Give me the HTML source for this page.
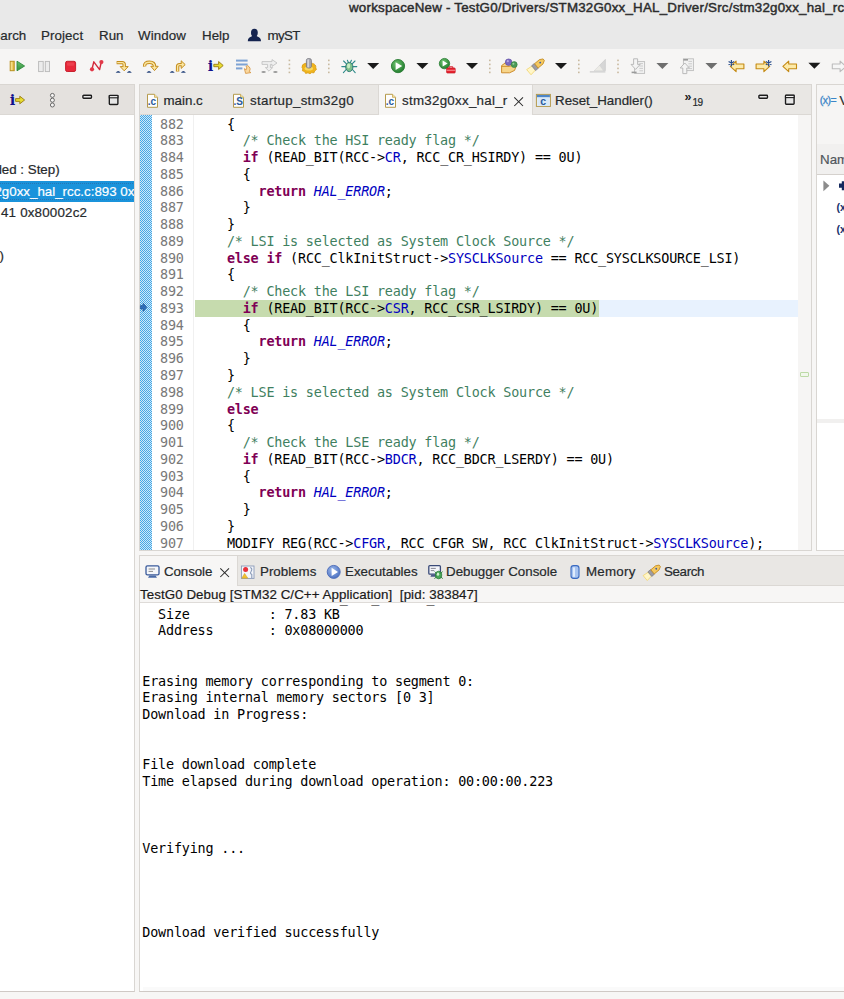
<!DOCTYPE html>
<html lang="en">
<head>
<meta charset="utf-8">
<title>workspaceNew - TestG0/Drivers/STM32G0xx_HAL_Driver/Src/stm32g0xx_hal_rcc.c</title>
<style>
html,body{margin:0;padding:0}
body{width:844px;height:999px;overflow:hidden;position:relative;background:#f7f6f5;
  font-family:"Liberation Sans",sans-serif;font-size:13.33px;color:#262a2c}
.abs,.t,.ln,.cl,.co,svg.i{position:absolute}
.t{white-space:nowrap;line-height:16px;height:16px;-webkit-text-stroke:0.2px}
.mono,.ln,.cl,.co{font-family:"DejaVu Sans Mono","Liberation Mono",monospace;font-size:13.45px;letter-spacing:-0.193px;white-space:pre;line-height:16.76px;height:16.76px;color:#000}
.ln{left:147.2px;width:36.5px;text-align:right;color:#787878}
.cl{left:195.3px}
.co{left:142.3px}
.k{color:#7f0055;font-weight:bold}
.c{color:#3f7f5f}
.f{color:#0000c0}
.e{color:#0000c0;font-style:italic}
#top{left:0;top:0;width:844px;height:49px;background:#e9e9e9}
#tb{left:0;top:49px;width:844px;height:35px;background:#f6f5f4}
.panel{background:#fff;border:1px solid #d9d6d2;box-sizing:border-box;overflow:hidden}
.tabbar{position:absolute;left:0;top:0;right:0;height:29px;background:#e9e7e4;border-bottom:1px solid #dbd8d4}
.atab{position:absolute;top:0;height:30px;background:#f7f6f5;border-left:1px solid #dbd8d4;border-right:1px solid #dbd8d4;box-sizing:border-box}
</style>
</head>
<body>
<!-- title + menu -->
<div id="top" class="abs"></div>
<div class="t" style="left:349px;top:0px;color:#2c2c2c;-webkit-text-stroke:0.45px #2c2c2c;letter-spacing:0.22px">workspaceNew - TestG0/Drivers/STM32G0xx_HAL_Driver/Src/stm32g0xx_hal_rcc.c</div>
<div class="t" style="left:-16px;top:28px">Search</div>
<div class="t" style="left:41px;top:28px;letter-spacing:0.1px">Project</div>
<div class="t" style="left:99px;top:28px">Run</div>
<div class="t" style="left:138px;top:28px;letter-spacing:0.1px">Window</div>
<div class="t" style="left:202px;top:28px">Help</div>
<div class="t" style="left:267.5px;top:28px;letter-spacing:-0.6px">myST</div>

<!-- toolbar -->
<div id="tb" class="abs"></div>

<!-- left panel (Debug view) -->
<div class="abs panel" id="lp" style="left:-2px;top:84px;width:137px;height:908px;border-bottom-color:#cfc9c5">
  <div class="tabbar" style="background:#e4e1de"></div>
  <div class="abs" style="left:0;top:95.7px;width:137px;height:21px;background:#1a93db"></div>
  <div class="abs" style="left:-4px;top:97.7px;width:140px;height:17px;border-top:1px dotted #2676b4;border-bottom:1px dotted #2676b4;box-sizing:border-box"></div>
  <div class="t" style="left:-19.4px;top:77px">ended : Step)</div>
  <div class="t" style="left:-12px;top:98.5px;color:#fff;letter-spacing:0px">32g0xx_hal_rcc.c:893 0x80002d0</div>
  <div class="t" style="left:2px;top:120px;letter-spacing:0.2px">41 0x80002c2</div>
  <div class="t" style="left:0.4px;top:163px">)</div>
</div>

<!-- editor panel -->
<div class="abs panel" id="ed" style="left:139px;top:84px;width:673px;height:467px">
  <div class="tabbar"></div>
  <div class="atab" style="left:238px;width:155px"></div>
  <!-- gutter -->
  <div class="abs" style="left:0;top:30px;width:12px;height:436px;background:repeating-conic-gradient(#45a7e6 0% 25%,#cfe9f8 0% 50%) 0 0/2px 2px"></div>
  <div class="abs" style="left:53px;top:30px;width:1px;height:436px;background:#f0f0f0"></div>
  <!-- overview ruler -->
  <div class="abs" style="left:658px;top:30px;width:14px;height:440px;background:#f6f5f4"></div>
  <div class="abs" style="left:659.5px;top:287px;width:9px;height:5px;border:1px solid #bcdaa6;border-radius:1px;background:#f1f7ec;box-sizing:border-box"></div>
  <!-- current line -->
  <div class="abs" style="left:55px;top:215.3px;width:603px;height:16.6px;background:#e8f2fe"></div>
  <div class="abs" style="left:55px;top:215.3px;width:404px;height:16.6px;background:#c6dbae"></div>
</div>
<div class="t" style="left:163.5px;top:93px">main.c</div>
<div class="t" style="left:250px;top:93px;letter-spacing:0.31px">startup_stm32g0</div>
<div class="t" style="left:402px;top:93px;letter-spacing:0.27px">stm32g0xx_hal_r</div>
<div class="t" style="left:555px;top:93px">Reset_Handler()</div>
<div class="t" style="left:692.6px;top:95.3px;font-size:10px;letter-spacing:-0.6px">19</div>
<div id="code" class="abs" style="left:0;top:0;width:844px;height:550px;overflow:hidden">
<div class="ln" style="top:116.60px">882</div><div class="cl" style="top:116.60px">    {</div>
<div class="ln" style="top:133.36px">883</div><div class="cl" style="top:133.36px">      <span class="c">/* Check the HSI ready flag */</span></div>
<div class="ln" style="top:150.12px">884</div><div class="cl" style="top:150.12px">      <span class="k">if</span> (READ_BIT(RCC-&gt;<span class="f">CR</span>, RCC_CR_HSIRDY) == 0U)</div>
<div class="ln" style="top:166.88px">885</div><div class="cl" style="top:166.88px">      {</div>
<div class="ln" style="top:183.64px">886</div><div class="cl" style="top:183.64px">        <span class="k">return</span> <span class="e">HAL_ERROR</span>;</div>
<div class="ln" style="top:200.40px">887</div><div class="cl" style="top:200.40px">      }</div>
<div class="ln" style="top:217.16px">888</div><div class="cl" style="top:217.16px">    }</div>
<div class="ln" style="top:233.92px">889</div><div class="cl" style="top:233.92px">    <span class="c">/* LSI is selected as System Clock Source */</span></div>
<div class="ln" style="top:250.68px">890</div><div class="cl" style="top:250.68px">    <span class="k">else</span> <span class="k">if</span> (RCC_ClkInitStruct-&gt;<span class="f">SYSCLKSource</span> == RCC_SYSCLKSOURCE_LSI)</div>
<div class="ln" style="top:267.44px">891</div><div class="cl" style="top:267.44px">    {</div>
<div class="ln" style="top:284.20px">892</div><div class="cl" style="top:284.20px">      <span class="c">/* Check the LSI ready flag */</span></div>
<div class="ln" style="top:300.96px">893</div><div class="cl" style="top:300.96px">      <span class="k">if</span> (READ_BIT(RCC-&gt;<span class="f">CSR</span>, RCC_CSR_LSIRDY) == 0U)</div>
<div class="ln" style="top:317.72px">894</div><div class="cl" style="top:317.72px">      {</div>
<div class="ln" style="top:334.48px">895</div><div class="cl" style="top:334.48px">        <span class="k">return</span> <span class="e">HAL_ERROR</span>;</div>
<div class="ln" style="top:351.24px">896</div><div class="cl" style="top:351.24px">      }</div>
<div class="ln" style="top:368.00px">897</div><div class="cl" style="top:368.00px">    }</div>
<div class="ln" style="top:384.76px">898</div><div class="cl" style="top:384.76px">    <span class="c">/* LSE is selected as System Clock Source */</span></div>
<div class="ln" style="top:401.52px">899</div><div class="cl" style="top:401.52px">    <span class="k">else</span></div>
<div class="ln" style="top:418.28px">900</div><div class="cl" style="top:418.28px">    {</div>
<div class="ln" style="top:435.04px">901</div><div class="cl" style="top:435.04px">      <span class="c">/* Check the LSE ready flag */</span></div>
<div class="ln" style="top:451.80px">902</div><div class="cl" style="top:451.80px">      <span class="k">if</span> (READ_BIT(RCC-&gt;<span class="f">BDCR</span>, RCC_BDCR_LSERDY) == 0U)</div>
<div class="ln" style="top:468.56px">903</div><div class="cl" style="top:468.56px">      {</div>
<div class="ln" style="top:485.32px">904</div><div class="cl" style="top:485.32px">        <span class="k">return</span> <span class="e">HAL_ERROR</span>;</div>
<div class="ln" style="top:502.08px">905</div><div class="cl" style="top:502.08px">      }</div>
<div class="ln" style="top:518.84px">906</div><div class="cl" style="top:518.84px">    }</div>
<div class="ln" style="top:535.60px">907</div><div class="cl" style="top:535.60px">    MODIFY_REG(RCC-&gt;<span class="f">CFGR</span>, RCC_CFGR_SW, RCC_ClkInitStruct-&gt;<span class="f">SYSCLKSource</span>);</div>
</div>

<!-- right panel (Variables) -->
<div class="abs panel" id="rp" style="left:816px;top:84px;width:40px;height:467px">
  <div class="abs" style="left:0;top:0;width:40px;height:59px;background:#f6f5f4"></div>
  <div class="abs" style="left:0;top:59px;width:40px;height:30px;background:#f1f0ef;border-bottom:1px solid #d5d1cd"></div>
  <div class="abs" style="left:0;top:334px;width:40px;height:4px;background:#f1f0ef"></div>
</div>
<div class="t" style="left:820px;top:152px;color:#50565c">Name</div>
<div class="t" style="left:839.5px;top:93px">Variables</div>

<!-- console panel -->
<div class="abs panel" id="cp" style="left:139px;top:555px;width:720px;height:437px;border-bottom-color:#cfc9c5">
  <div class="tabbar" style="height:29px"></div>
  <div class="atab" style="left:-1px;width:99px;height:30px"></div>
  <div class="abs" style="left:0;top:30px;right:0;height:16px;background:#f7f6f5;border-bottom:1px solid #dedbd8"></div>
</div>
<div class="t" style="left:164px;top:564px;letter-spacing:-0.1px">Console</div>
<div class="t" style="left:260px;top:564px">Problems</div>
<div class="t" style="left:345px;top:564px">Executables</div>
<div class="t" style="left:446px;top:564px">Debugger Console</div>
<div class="t" style="left:586px;top:564px;letter-spacing:0.25px">Memory</div>
<div class="t" style="left:664px;top:564px;letter-spacing:-0.35px">Search</div>
<div class="t" style="left:140px;top:587px;color:#1a1a1a;letter-spacing:0.07px">TestG0 Debug [STM32 C/C++ Application]&nbsp; [pid: 383847]</div>
<div id="console" class="abs" style="left:0;top:603px;width:844px;height:388px;overflow:hidden">
<div class="co" style="top:-13.16px">  File          : ST-LINK_GDB_server_a07972.srec</div>
<div class="co" style="top:3.60px">  Size          : 7.83 KB</div>
<div class="co" style="top:20.36px">  Address       : 0x08000000</div>
<div class="co" style="top:70.64px">Erasing memory corresponding to segment 0:</div>
<div class="co" style="top:87.40px">Erasing internal memory sectors [0 3]</div>
<div class="co" style="top:104.16px">Download in Progress:</div>
<div class="co" style="top:154.44px">File download complete</div>
<div class="co" style="top:171.20px">Time elapsed during download operation: 00:00:00.223</div>
<div class="co" style="top:238.24px">Verifying ...</div>
<div class="co" style="top:322.04px">Download verified successfully</div>
</div>

<div class="abs" style="left:143px;top:986.5px;width:701px;height:4px;background:#fafafa"></div>
<svg class="i" style="left:0;top:0" width="844" height="999" viewBox="0 0 844 999">
<defs>
  <linearGradient id="gy" x1="0" y1="0" x2="1" y2="0"><stop offset="0" stop-color="#fff3b0"/><stop offset="1" stop-color="#e0b030"/></linearGradient>
  <linearGradient id="gg" x1="0" y1="0" x2="0" y2="1"><stop offset="0" stop-color="#6cc070"/><stop offset="1" stop-color="#2f8f3a"/></linearGradient>
  <radialGradient id="grun" cx="0.4" cy="0.35" r="0.7"><stop offset="0" stop-color="#6fc46f"/><stop offset="1" stop-color="#1f7a2c"/></radialGradient>
  <radialGradient id="gblue" cx="0.4" cy="0.35" r="0.7"><stop offset="0" stop-color="#9bb8ea"/><stop offset="1" stop-color="#4a6fc0"/></radialGradient>
  <!-- dropdown triangles -->
  <path id="dd" d="M0,0 h12 l-6,6 z"/>
  <!-- toolbar separator -->
  <g id="sep" fill="#c9b99f"><rect x="0" y="0" width="1.6" height="1.6"/><rect x="0" y="4" width="1.6" height="1.6"/><rect x="0" y="8" width="1.6" height="1.6"/><rect x="0" y="12" width="1.6" height="1.6"/></g>
  <!-- c file icon 11x14 -->
  <g id="cfile">
    <path d="M0.5,0.5 h7 l3,3 v10 h-10 z" fill="#fdfdfd" stroke="#b59a4c" stroke-width="1"/>
    <path d="M7.5,0.5 v3 h3" fill="#f3e2a8" stroke="#c8a64e" stroke-width="0.8"/>
  </g>
  <!-- minimize / maximize -->
  <g id="mini"><rect x="-0.6" y="-0.6" width="11.2" height="5.6" rx="1.5" fill="#fff" opacity="0.55"/><rect x="0.7" y="0.7" width="8.6" height="3" rx="0.7" fill="#e6e6e6" stroke="#1c1c1c" stroke-width="1.4"/></g>
  <g id="maxi"><rect x="-0.6" y="-0.6" width="11.2" height="11.6" rx="1.5" fill="#fff" opacity="0.55"/><rect x="0.7" y="0.7" width="8.6" height="9" rx="0.7" fill="#e6e6e6" stroke="#1c1c1c" stroke-width="1.4"/><rect x="0.7" y="0.7" width="8.6" height="2.3" fill="#f4f4f4" stroke="#1c1c1c" stroke-width="1.1"/></g>
  <g id="closex" stroke="#2b2b2b" stroke-width="1.05" stroke-linecap="butt"><path d="M0.3,0.3 L9,9 M9,0.3 L0.3,9"/></g>
  <!-- yellow arrow pointing left, 15x12 -->
  <path id="arrL" d="M0.7,6 L6.5,0.7 V3.6 H14.3 V8.4 H6.5 V11.3 Z"/>
</defs>

<!-- ================= main toolbar ================= -->
<!-- resume -->
<rect x="10.2" y="61.3" width="4" height="9.4" fill="url(#gy)" stroke="#b8901e" stroke-width="1"/>
<path d="M17,61.2 L24.6,66 L17,70.8 Z" fill="url(#gg)" stroke="#2c8a3a" stroke-width="0.9" stroke-linejoin="round"/>
<!-- suspend (disabled) -->
<rect x="38.6" y="61.4" width="4.6" height="10.2" fill="#ececec" stroke="#b9b9b9" stroke-width="0.9"/>
<rect x="45.3" y="61.4" width="4.2" height="10.2" fill="#ececec" stroke="#b9b9b9" stroke-width="0.9"/>
<!-- terminate -->
<rect x="65.6" y="61.3" width="10" height="10.2" rx="1.6" fill="#e8283a" stroke="#c8222f" stroke-width="1"/>
<rect x="67" y="62.6" width="7.2" height="3.2" rx="1" fill="#f0505c" opacity="0.6"/>
<!-- disconnect -->
<path d="M92,69 L93.8,61.8 L99.6,69.6 L101.2,62.4" fill="none" stroke="#d2283a" stroke-width="1.4" stroke-linejoin="round"/>
<circle cx="92" cy="69.3" r="2.1" fill="#e23848"/><circle cx="101.4" cy="62.1" r="2.1" fill="#e23848"/>
<!-- step into -->
<g fill="none" stroke-linejoin="round" stroke-linecap="butt">
  <path d="M116.6,62.6 H122.2 Q124.2,62.6 124.2,64.6 V67" stroke="#c48d1e" stroke-width="3.4"/>
  <path d="M120.2,66.6 H128.2 L124.2,70.8 Z" fill="#fbe6a0" stroke="#c48d1e" stroke-width="1"/>
  <path d="M117.2,62.6 H122.2 Q124.2,62.6 124.2,64.6 V67.4" stroke="#fbe6a0" stroke-width="1.4"/>
</g>
<path d="M115.7,72.7 Q118.2,69.3 120.7,72.7 Z" fill="#27457c"/><path d="M126.8,72.7 Q129.3,69.3 131.8,72.7 Z" fill="#27457c"/>
<!-- step over -->
<g fill="none" stroke-linejoin="round">
  <path d="M144.6,66.5 Q144.2,62.2 149.5,62.2 Q154.6,62.2 154.6,66.6" stroke="#c48d1e" stroke-width="3.4"/>
  <path d="M150.8,66.3 H158.2 L154.5,70.6 Z" fill="#fbe6a0" stroke="#c48d1e" stroke-width="1"/>
  <path d="M144.6,66 Q144.4,62.2 149.5,62.2 Q154.6,62.2 154.6,67" stroke="#fbe6a0" stroke-width="1.4"/>
</g>
<path d="M146.5,72.7 Q149.0,69.3 151.5,72.7 Z" fill="#27457c"/>
<!-- step return -->
<g fill="none" stroke-linejoin="round">
  <path d="M177.6,71.5 V66.6 Q177.6,64.6 179.6,64.6 H181.5" stroke="#c48d1e" stroke-width="3.4"/>
  <path d="M181.2,60.8 L185.2,64.6 L181.2,68.4 Z" fill="#fbe6a0" stroke="#c48d1e" stroke-width="1"/>
  <path d="M177.6,71 V66.6 Q177.6,64.6 179.6,64.6 H182" stroke="#fbe6a0" stroke-width="1.4"/>
</g>
<path d="M169.7,72.7 Q172.2,69.3 174.7,72.7 Z" fill="#27457c"/><path d="M180.9,72.7 Q183.4,69.3 185.9,72.7 Z" fill="#27457c"/>
<!-- instruction stepping mode -->
<text x="207.8" y="71" font-family="DejaVu Serif, Liberation Serif, serif" font-weight="bold" font-size="14.5" fill="#10108c">i</text>
<path d="M213.8,64.3 H218.6 V61.5 L223.2,65.5 L218.6,69.5 V66.7 H213.8 Z" fill="#e6dc30" stroke="#9a7a10" stroke-width="0.9" stroke-linejoin="round"/>
<!-- drop to frame -->
<rect x="236" y="59.6" width="11.6" height="2" fill="#7ea3d4"/><rect x="236" y="63.5" width="11.6" height="2" fill="#7ea3d4"/><rect x="236" y="67.4" width="6.4" height="2" fill="#7ea3d4"/>
<path d="M247.6,65.6 Q251.6,68 249.2,71.6 L251,72.6 L245.6,73.4 L244.4,68.6 L246.2,69.8 Q247.6,67.6 246,66.4 Z" fill="#fbd9a0" stroke="#d89a4a" stroke-width="0.9" stroke-linejoin="round"/>
<!-- disabled step icon -->
<g fill="#efefef" stroke="#c2c2c2" stroke-width="0.9" stroke-linejoin="round">
  <path d="M262,61.6 H272 V59.6 L277,63 L272,66.4 V64.4 H270.4 V67.6 H272.6 L269,71.2 L265.4,67.6 H267.6 V64.4 H262 Z"/>
</g>
<ellipse cx="263.6" cy="72" rx="2.2" ry="1" fill="#9a9a9a"/><ellipse cx="275.4" cy="72" rx="2.2" ry="1" fill="#9a9a9a"/>
<use href="#sep" x="288.6" y="59.6"/>
<!-- build / gear with pin -->
<path d="M302,67.6 Q301.6,64.2 305,63.4 H312.6 Q316.2,64.4 315.8,67.8 L316.4,69.6 L314.6,71 L314,72.8 L311.6,72.6 L310,73.8 L308,72.8 L305.6,73.4 L304.6,71.6 L302.4,70.8 L302.8,68.8 Z" fill="#f0b41c" stroke="#d89a10" stroke-width="0.8" stroke-linejoin="round"/>
<ellipse cx="308.8" cy="68.4" rx="4.2" ry="2" fill="#f8d860"/>
<rect x="306.4" y="58.6" width="5" height="9.4" rx="1.8" fill="#a9a9b0" stroke="#77777f" stroke-width="0.8"/>
<rect x="307.4" y="59.4" width="1.5" height="8" fill="#d8d8de"/>
<use href="#sep" x="328" y="59.6"/>
<!-- debug bug -->
<g stroke="#2e8a8a" stroke-width="1.1" fill="none" stroke-linecap="round">
  <path d="M343.6,61 L347,64.4 M355,61 L351.6,64.4 M341.8,66.6 H346 M352.6,66.6 H356.8 M343.4,72.6 L346.6,69 M355.2,72.6 L352,69 M347.4,60.2 L348.4,62.4 M351.4,60.2 L350.4,62.4"/>
</g>
<ellipse cx="349.3" cy="67" rx="3.6" ry="4.6" fill="#7fc08a" stroke="#2e7a78" stroke-width="1"/>
<ellipse cx="348.6" cy="66" rx="1.6" ry="2.4" fill="#c9ecc4"/>
<use href="#dd" x="367.2" y="63" fill="#1a1a1a"/>
<!-- run -->
<circle cx="398" cy="66.1" r="6.6" fill="url(#grun)" stroke="#2a7d34" stroke-width="0.9"/>
<path d="M395.6,62.2 L402.2,66.1 L395.6,70 Z" fill="#fff"/>
<use href="#dd" x="416.4" y="63" fill="#1a1a1a"/>
<!-- run external tools -->
<circle cx="444.5" cy="63.6" r="5.2" fill="url(#grun)" stroke="#2a7d34" stroke-width="0.8"/>
<path d="M442.6,60.6 L447.6,63.6 L442.6,66.6 Z" fill="#fff"/>
<rect x="446.6" y="68" width="8.6" height="5" rx="0.8" fill="#e8222e" stroke="#c01822" stroke-width="0.7"/>
<path d="M449,68 V66.8 H452.8 V68" fill="none" stroke="#d81e2a" stroke-width="1"/>
<rect x="446.6" y="69.8" width="8.6" height="0.9" fill="#f8a0a4"/>
<use href="#dd" x="466" y="63" fill="#1a1a1a"/>
<use href="#sep" x="489" y="59.6"/>
<!-- open element (folder with balls) -->
<path d="M501.6,65.6 L505.4,62.8 H515 L516.6,64.8 L514.6,70.4 L509.6,72.8 H501.6 Z" fill="#f7d58a" stroke="#c8821e" stroke-width="0.9" stroke-linejoin="round"/>
<path d="M501.6,66.4 H509.6 L514.8,64.6" fill="none" stroke="#c8821e" stroke-width="0.8"/>
<circle cx="508.6" cy="62.2" r="3.3" fill="#7a68c0" stroke="#5a4aa0" stroke-width="0.6"/><circle cx="507.8" cy="61.2" r="1.1" fill="#b5a8e6"/>
<circle cx="514.2" cy="64.6" r="3" fill="#4a9a58" stroke="#2e7a3c" stroke-width="0.6"/><circle cx="513.4" cy="63.8" r="1" fill="#9ad0a0"/>
<!-- search flashlight -->
<g transform="translate(536.2,66) rotate(-40)">
  <path d="M-9.6,-3.4 L-3,-2.6 V2.6 L-9.6,3.4 Z" fill="#fff6c8" stroke="#f2d264" stroke-width="0.7"/>
  <rect x="-3.4" y="-3.1" width="3.6" height="6.2" fill="#9c9ca4" stroke="#74747c" stroke-width="0.6"/>
  <path d="M0.2,-2.8 H6.6 L9.8,-1 V1 L6.6,2.8 H0.2 Z" fill="#f4c860" stroke="#c48a1e" stroke-width="0.8" stroke-linejoin="round"/>
  <circle cx="5.2" cy="0" r="0.9" fill="#3a5aa8"/>
</g>
<use href="#dd" x="555" y="63" fill="#1a1a1a"/>
<use href="#sep" x="578" y="59.6"/>
<!-- disabled marker -->
<path d="M594.4,70.6 L605.4,59.4 V70.6 Z" fill="#d6d6d6" stroke="#c4c4c4" stroke-width="0.6"/>
<path d="M594.4,70.6 L599.4,65.6 L603,70.6 Z" fill="#ecebe6"/>
<rect x="589.8" y="71.4" width="15.6" height="1" fill="#c4c4c4"/>
<use href="#sep" x="617.2" y="59.6"/>
<!-- next annotation (disabled) -->
<g>
  <rect x="634.6" y="61.6" width="10" height="11.8" fill="#f2f2f2" stroke="#bdbdbd" stroke-width="0.9"/>
  <path d="M639.4,63.6 h3.6 M639.4,66 h3.6 M639.4,68.4 h3.6 M639.4,70.8 h3.6" stroke="#c6c6c6" stroke-width="0.9"/>
  <path d="M633.6,58.8 H637.6 V64.4 H640.2 L635.6,69.4 L631,64.4 H633.6 Z" fill="#f4f4f4" stroke="#b4b4b4" stroke-width="0.9" stroke-linejoin="round"/>
  <rect x="631.6" y="71.6" width="5" height="1.6" fill="#9a9a9a"/>
</g>
<use href="#dd" x="656.4" y="63" fill="#6e6e6e"/>
<!-- previous annotation (disabled) -->
<g>
  <rect x="683.4" y="58.8" width="10" height="11.8" fill="#f2f2f2" stroke="#bdbdbd" stroke-width="0.9"/>
  <path d="M688.4,61.4 h3.6 M688.4,63.8 h3.6 M688.4,66.2 h3.6 M688.4,68.6 h3.6" stroke="#c6c6c6" stroke-width="0.9"/>
  <rect x="683.4" y="59" width="4.6" height="1.6" fill="#9a9a9a"/>
  <path d="M682.8,73.6 H686.8 V68 H689.4 L684.8,63 L680.2,68 H682.8 Z" fill="#f4f4f4" stroke="#b4b4b4" stroke-width="0.9" stroke-linejoin="round"/>
</g>
<use href="#dd" x="705.4" y="63" fill="#6e6e6e"/>
<!-- last edit location -->
<use href="#arrL" x="729.6" y="60.4" fill="#fdeaa8" stroke="#c48a14" stroke-width="1.1" stroke-linejoin="round"/>
<path d="M731.4,60 V66.4 M728.6,61.6 L734.2,64.8 M734.2,61.6 L728.6,64.8" stroke="#2c4f8c" stroke-width="1.2"/>
<!-- next edit location -->
<g transform="translate(770.4,0) scale(-1,1)"><use href="#arrL" x="0" y="60.4" fill="#fdeaa8" stroke="#c48a14" stroke-width="1.1" stroke-linejoin="round"/></g>
<path d="M768.6,60 V66.4 M765.8,61.6 L771.4,64.8 M771.4,61.6 L765.8,64.8" stroke="#2c4f8c" stroke-width="1.2"/>
<!-- back -->
<use href="#arrL" x="782.2" y="60.4" fill="#fdeaa8" stroke="#c48a14" stroke-width="1.1" stroke-linejoin="round"/>
<use href="#dd" x="808.4" y="62.8" fill="#1a1a1a"/>
<!-- forward (disabled) -->
<g transform="translate(846.6,0) scale(-1,1)"><use href="#arrL" x="0" y="60.4" fill="#f6f6f6" stroke="#bcbcbc" stroke-width="1.1" stroke-linejoin="round"/></g>

<!-- ================= menu: myST user icon ================= -->
<ellipse cx="254.4" cy="32.7" rx="3.4" ry="3.9" fill="#14234f"/>
<path d="M247.8,41.3 Q247.8,37.6 251.4,36.5 L253,35.4 H255.8 L257.4,36.5 Q261,37.6 261,41.3 Z" fill="#14234f"/>

<!-- ================= left panel toolbar ================= -->
<text x="9.8" y="105" font-family="DejaVu Serif, Liberation Serif, serif" font-weight="bold" font-size="14.5" fill="#10108c">i</text>
<path d="M15.6,98.6 H19.8 V96.2 L24.6,100 L19.8,103.8 V101.4 H15.6 Z" fill="#e6dc30" stroke="#9a7a10" stroke-width="0.9" stroke-linejoin="round"/>
<g fill="#f6f5f4" stroke="#5c5c5c" stroke-width="0.9"><circle cx="52.4" cy="95.4" r="2"/><circle cx="52.4" cy="100.2" r="2"/><circle cx="52.4" cy="105" r="2"/></g>
<use href="#mini" x="82.2" y="94.6"/>
<use href="#maxi" x="108.6" y="94.8"/>

<!-- ================= editor tabs ================= -->
<use href="#cfile" x="147" y="93.8"/>
<text x="147.8" y="105.3" font-family="Liberation Sans, sans-serif" font-weight="bold" font-size="10" fill="#2a5a9c">.c</text>
<use href="#cfile" x="233" y="93.8"/>
<text x="233.6" y="105.3" font-family="Liberation Sans, sans-serif" font-weight="bold" font-size="10" fill="#2a5a9c">.S</text>
<use href="#cfile" x="385" y="93.8"/>
<text x="385.8" y="105.3" font-family="Liberation Sans, sans-serif" font-weight="bold" font-size="10" fill="#2a5a9c">.c</text>
<use href="#closex" x="514" y="97"/>
<!-- function icon -->
<rect x="536.4" y="94.4" width="14" height="12" fill="#eaf3fb" stroke="#b59a4c" stroke-width="1"/>
<rect x="536.9" y="94.9" width="13" height="2.4" fill="#4d86c8"/>
<rect x="537.4" y="97.6" width="12" height="8.2" fill="#d9e9f8"/>
<text x="540.2" y="105" font-family="Liberation Sans, sans-serif" font-weight="bold" font-size="10.5" fill="#2a5a9c">c</text>
<!-- chevron -->
<text x="684.4" y="101.4" font-family="Liberation Sans, sans-serif" font-weight="bold" font-size="12.5" fill="#1a1a1a">»</text>
<use href="#mini" x="758.2" y="94.6"/>
<use href="#maxi" x="784.8" y="94.6"/>

<!-- instruction pointer -->
<path d="M140.4,305.6 H143.2 V303.2 L146.8,307.3 L143.2,311.4 V309 H140.4 Z" fill="#2f6fb8" stroke="#1f4f90" stroke-width="0.6" stroke-linejoin="round"/>

<!-- ================= variables view ================= -->
<text x="819.8" y="103.6" font-family="Liberation Sans, sans-serif" font-size="10.5" fill="#3a86c8" stroke="#3a86c8" stroke-width="0.3" letter-spacing="-0.55">(x)=</text>
<path d="M823.4,180.4 L829.4,185.8 L823.4,191.2 Z" fill="#8c8c8c"/>
<path d="M839,183.6 H841.8 V181.2 H844 V190.2 H841.8 V187.8 H839 Z" fill="#14285e"/>
<text x="836.4" y="211" font-family="Liberation Sans, sans-serif" font-weight="bold" font-size="10.5" fill="#17306c">(x)=</text>
<text x="836.4" y="233" font-family="Liberation Sans, sans-serif" font-weight="bold" font-size="10.5" fill="#17306c">(x)=</text>

<!-- ================= console tabs ================= -->
<!-- console monitor -->
<rect x="146" y="565.8" width="13" height="9" rx="1.4" fill="#f4f6fa" stroke="#3a5a9a" stroke-width="1.3"/>
<path d="M148.6,569 h6.4 M148.6,571.4 h4.4" stroke="#8a8a8a" stroke-width="1"/>
<path d="M149.4,575.4 h6.2 l1.4,2.4 h-9 z" fill="#4a6aa8"/>
<use href="#closex" x="220" y="568"/>
<!-- problems -->
<rect x="241.4" y="566" width="12.6" height="12.4" fill="#f4f6fa" stroke="#8a9ab8" stroke-width="0.9"/>
<circle cx="245.6" cy="569.4" r="2.5" fill="#e8303a"/>
<path d="M244.6,573.4 L247.8,578.2 H241.8 Z" fill="#f2c12e" stroke="#c89a1e" stroke-width="0.5"/>
<path d="M250.2,567.6 q2.6,1 1,3.6 q-1.6,2.2 0.6,3.4 v3.4" fill="none" stroke="#8a9ab8" stroke-width="1.1"/>
<!-- executables -->
<circle cx="333.7" cy="571.9" r="6.5" fill="url(#gblue)" stroke="#4a6ab8" stroke-width="0.9"/>
<path d="M331.6,567.8 L338,571.9 L331.6,576 Z" fill="#fff"/>
<!-- debugger console -->
<rect x="428.8" y="565.6" width="11.6" height="8.6" rx="1" fill="#f4f6fa" stroke="#3a4a78" stroke-width="1.3"/>
<path d="M430.8,568.4 h5 M430.8,570.6 h3.4" stroke="#7a7a8a" stroke-width="0.9"/>
<path d="M431.4,574.6 h5.4 l1,2.2 h-7.4 z" fill="#4a5a88"/>
<ellipse cx="438.6" cy="575" rx="3.2" ry="3.8" fill="#4aa85a" stroke="#2a7a3a" stroke-width="0.8"/>
<path d="M434.6,571.6 l2,1.8 M442.6,571.6 l-2,1.8 M434.4,578.6 l2,-1.6 M442.8,578.6 l-2,-1.6" stroke="#2a7a3a" stroke-width="0.9"/>
<ellipse cx="438" cy="574.2" rx="1.2" ry="1.6" fill="#d0f0d0"/>
<!-- memory -->
<rect x="571" y="565.6" width="8" height="12.8" rx="2.6" fill="#a8c4f0" stroke="#3a6ac0" stroke-width="1.1"/>
<rect x="573" y="567.4" width="2" height="9.4" fill="#e0ecfc"/>
<!-- search -->
<g transform="translate(652.4,572) rotate(-40)">
  <path d="M-9.4,-3.2 L-3,-2.5 V2.5 L-9.4,3.2 Z" fill="#fff6c8" stroke="#f2d264" stroke-width="0.7"/>
  <rect x="-3.4" y="-3" width="3.6" height="6" fill="#9c9ca4" stroke="#74747c" stroke-width="0.6"/>
  <path d="M0.2,-2.7 H6.4 L9.6,-1 V1 L6.4,2.7 H0.2 Z" fill="#f4c860" stroke="#c48a1e" stroke-width="0.8" stroke-linejoin="round"/>
  <circle cx="5" cy="0" r="0.9" fill="#3a5aa8"/>
</g>
</svg>

</body>
</html>
